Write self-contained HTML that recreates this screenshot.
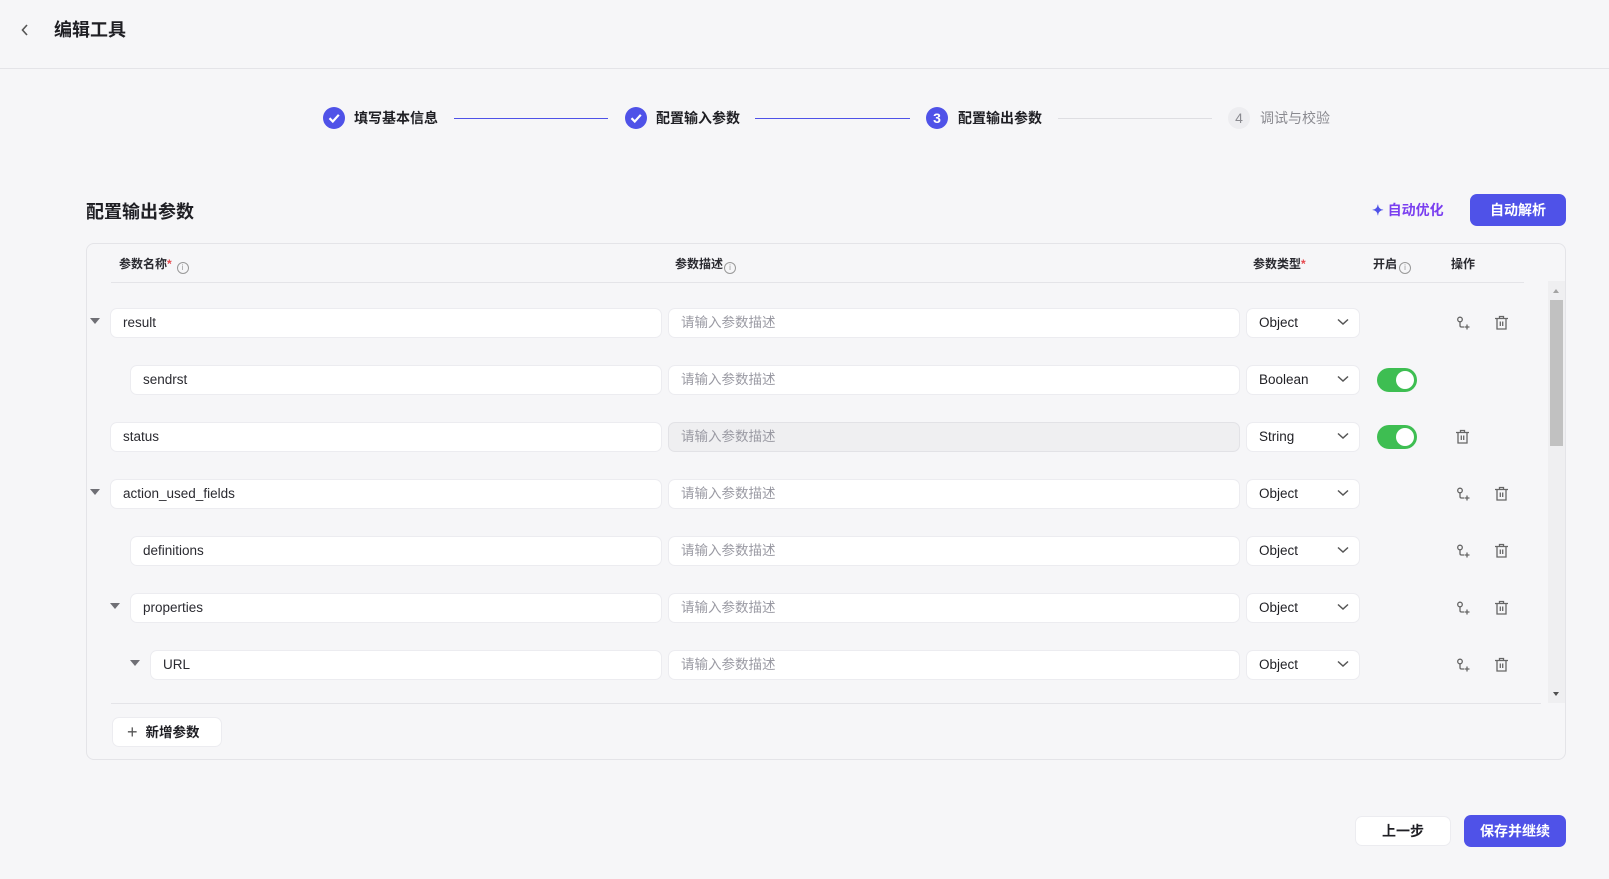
<!DOCTYPE html>
<html><head><meta charset="utf-8"><style>
*{box-sizing:border-box;margin:0;padding:0}
body{width:1609px;height:879px;background:#f6f6f8;font-family:"Liberation Sans","Noto Sans CJK SC",sans-serif;color:#1f1f24;position:relative;overflow:hidden}
.a{position:absolute}
.hdr{left:0;top:0;width:1609px;height:69px;border-bottom:1px solid #e4e4e8}
.step{font-size:14px;font-weight:600;top:109px;line-height:18px}
.circ{width:22px;height:22px;border-radius:50%;top:107px;background:#4f52e8;color:#fff;font-size:14px;text-align:center;line-height:22px;font-weight:600}
.ln{height:1px;top:118px}
.inp{height:30px;background:#fff;border:1px solid #ececf0;border-radius:7px;font-size:13.5px;line-height:28px;padding-left:12px;color:#2a2a30}
.ph{color:#9a9aa3}
.sel{height:30px;background:#fff;border:1px solid #ececf0;border-radius:7px;font-size:13.5px;line-height:28px;padding-left:12px;width:114px;left:1246px}
.sel svg{position:absolute;right:10px;top:9px}
.tri{width:0;height:0;border-left:5px solid transparent;border-right:5px solid transparent;border-top:6px solid #6f6f75}
.tog{width:40px;height:24px;border-radius:12px;background:#3ebe52;left:1377px}
.tog::after{content:"";position:absolute;right:3px;top:3px;width:18px;height:18px;border-radius:50%;background:#fff}
.th{font-size:12px;font-weight:600;top:256px;color:#2a2a30;line-height:16px}
.info{display:inline-block;width:12px;height:12px;border:1px solid #999;border-radius:50%;font-size:8px;line-height:10px;text-align:center;color:#999;vertical-align:-2px;margin-left:5px;font-weight:400}
.star{color:#e5484d}
</style></head><body>
<div class="a hdr"></div>
<svg class="a" style="left:20px;top:23px" width="10" height="14" viewBox="0 0 10 14"><path d="M7 2 L2.5 7 L7 12" fill="none" stroke="#555" stroke-width="1.6"/></svg>
<div class="a" style="left:54px;top:18px;font-size:18px;font-weight:700;line-height:24px">编辑工具</div>

<div class="a circ" style="left:323px"><svg width="22" height="22" viewBox="0 0 22 22"><path d="M6.5 11.2 L9.8 14.5 L15.8 7.8" fill="none" stroke="#fff" stroke-width="2.2"/></svg></div>
<div class="a step" style="left:354px">填写基本信息</div>
<div class="a ln" style="left:454px;width:154px;background:#4f52e8"></div>
<div class="a circ" style="left:625px"><svg width="22" height="22" viewBox="0 0 22 22"><path d="M6.5 11.2 L9.8 14.5 L15.8 7.8" fill="none" stroke="#fff" stroke-width="2.2"/></svg></div>
<div class="a step" style="left:656px">配置输入参数</div>
<div class="a ln" style="left:755px;width:155px;background:#4f52e8"></div>
<div class="a circ" style="left:926px">3</div>
<div class="a step" style="left:958px">配置输出参数</div>
<div class="a ln" style="left:1058px;width:154px;background:#dedee2"></div>
<div class="a circ" style="left:1228px;background:#ededf0;color:#8a8a90;font-weight:400">4</div>
<div class="a step" style="left:1260px;color:#8a8a90;font-weight:400">调试与校验</div>

<div class="a" style="left:86px;top:200px;font-size:18px;font-weight:700;line-height:24px">配置输出参数</div>
<div class="a" style="left:1372px;top:201px;font-size:14px;font-weight:600;color:#7a3ff0;line-height:18px"><span style="color:#4f52e8">✦</span>&nbsp;自动优化</div>
<div class="a" style="left:1470px;top:194px;width:96px;height:32px;border-radius:7px;background:#4f52e8;color:#fff;font-size:14px;font-weight:600;text-align:center;line-height:32px">自动解析</div>

<div class="a" style="left:86px;top:243px;width:1480px;height:517px;border:1px solid #e4e4e8;border-radius:8px"></div>
<div class="a th" style="left:119px">参数名称<span class="star">*</span><span class="info">i</span></div>
<div class="a th" style="left:675px">参数描述<span class="info" style="margin-left:1px">i</span></div>
<div class="a th" style="left:1253px">参数类型<span class="star">*</span></div>
<div class="a th" style="left:1373px">开启<span class="info" style="margin-left:2px">i</span></div>
<div class="a th" style="left:1451px">操作</div>
<div class="a" style="left:111px;top:282px;width:1413px;height:1px;background:#e4e4e8"></div>
<div class="a" style="left:1548px;top:281px;width:17px;height:422px;background:#efeff1"></div>
<div class="a" style="left:1550px;top:300px;width:13px;height:146px;background:#c1c1c1"></div>
<div class="a" style="left:1553px;top:289px;width:0;height:0;border-left:3.5px solid transparent;border-right:3.5px solid transparent;border-bottom:4px solid #a3a3a3"></div>
<div class="a" style="left:1553px;top:692px;width:0;height:0;border-left:3.5px solid transparent;border-right:3.5px solid transparent;border-top:4px solid #505050"></div>
<div class="a" style="left:111px;top:703px;width:1430px;height:1px;background:#e4e4e8"></div>

<div class="a tri" style="left:90px;top:318px"></div>
<div class="a inp" style="left:110px;top:308px;width:552px">result</div>
<div class="a inp ph" style="left:668px;top:308px;width:572px">请输入参数描述</div>
<div class="a sel" style="top:308px">Object<svg width="12" height="8"><path d="M1 1.5 L6 6 L11 1.5" fill="none" stroke="#555" stroke-width="1.5"/></svg></div>

<div class="a inp" style="left:130px;top:365px;width:532px">sendrst</div>
<div class="a inp ph" style="left:668px;top:365px;width:572px">请输入参数描述</div>
<div class="a sel" style="top:365px">Boolean<svg width="12" height="8"><path d="M1 1.5 L6 6 L11 1.5" fill="none" stroke="#555" stroke-width="1.5"/></svg></div>
<div class="a tog" style="top:368px"></div>

<div class="a inp" style="left:110px;top:422px;width:552px">status</div>
<div class="a inp ph" style="left:668px;top:422px;width:572px;background:#efeff1;border-color:#e2e2e6">请输入参数描述</div>
<div class="a sel" style="top:422px">String<svg width="12" height="8"><path d="M1 1.5 L6 6 L11 1.5" fill="none" stroke="#555" stroke-width="1.5"/></svg></div>
<div class="a tog" style="top:425px"></div>

<div class="a tri" style="left:90px;top:489px"></div>
<div class="a inp" style="left:110px;top:479px;width:552px">action_used_fields</div>
<div class="a inp ph" style="left:668px;top:479px;width:572px">请输入参数描述</div>
<div class="a sel" style="top:479px">Object<svg width="12" height="8"><path d="M1 1.5 L6 6 L11 1.5" fill="none" stroke="#555" stroke-width="1.5"/></svg></div>

<div class="a inp" style="left:130px;top:536px;width:532px">definitions</div>
<div class="a inp ph" style="left:668px;top:536px;width:572px">请输入参数描述</div>
<div class="a sel" style="top:536px">Object<svg width="12" height="8"><path d="M1 1.5 L6 6 L11 1.5" fill="none" stroke="#555" stroke-width="1.5"/></svg></div>

<div class="a tri" style="left:110px;top:603px"></div>
<div class="a inp" style="left:130px;top:593px;width:532px">properties</div>
<div class="a inp ph" style="left:668px;top:593px;width:572px">请输入参数描述</div>
<div class="a sel" style="top:593px">Object<svg width="12" height="8"><path d="M1 1.5 L6 6 L11 1.5" fill="none" stroke="#555" stroke-width="1.5"/></svg></div>

<div class="a tri" style="left:130px;top:660px"></div>
<div class="a inp" style="left:150px;top:650px;width:512px">URL</div>
<div class="a inp ph" style="left:668px;top:650px;width:572px">请输入参数描述</div>
<div class="a sel" style="top:650px">Object<svg width="12" height="8"><path d="M1 1.5 L6 6 L11 1.5" fill="none" stroke="#555" stroke-width="1.5"/></svg></div>

<svg width="0" height="0" style="position:absolute"><defs>
<g id="br"><circle cx="4" cy="3.5" r="2.3" fill="none" stroke="#666" stroke-width="1.3"/><path d="M4 6 V9.5 Q4 11 5.5 11 H8" fill="none" stroke="#666" stroke-width="1.3"/><path d="M11 8.5 V13.5 M8.5 11 H13.5" stroke="#666" stroke-width="1.3"/></g>
<g id="tr"><path d="M1 3.5 H14 M5.5 3.5 V1.5 H9.5 V3.5 M3 3.5 V14 H12 V3.5 M6.3 6.5 V11 M8.7 6.5 V11" fill="none" stroke="#666" stroke-width="1.3"/></g>
</defs></svg>
<svg class="a" style="left:1456px;top:316px" width="15" height="15"><use href="#br"/></svg>
<svg class="a" style="left:1494px;top:315px" width="15" height="15"><use href="#tr"/></svg>
<svg class="a" style="left:1455px;top:429px" width="15" height="15"><use href="#tr"/></svg>
<svg class="a" style="left:1456px;top:487px" width="15" height="15"><use href="#br"/></svg>
<svg class="a" style="left:1494px;top:486px" width="15" height="15"><use href="#tr"/></svg>
<svg class="a" style="left:1456px;top:544px" width="15" height="15"><use href="#br"/></svg>
<svg class="a" style="left:1494px;top:543px" width="15" height="15"><use href="#tr"/></svg>
<svg class="a" style="left:1456px;top:601px" width="15" height="15"><use href="#br"/></svg>
<svg class="a" style="left:1494px;top:600px" width="15" height="15"><use href="#tr"/></svg>
<svg class="a" style="left:1456px;top:658px" width="15" height="15"><use href="#br"/></svg>
<svg class="a" style="left:1494px;top:657px" width="15" height="15"><use href="#tr"/></svg>

<div class="a" style="left:112px;top:717px;width:110px;height:30px;background:#fff;border:1px solid #ececf0;border-radius:7px;font-size:13.5px;font-weight:600;line-height:28px;padding-left:14px"><span style="font-weight:300;font-size:18px;color:#555;vertical-align:-1px;margin-right:8px">+</span>新增参数</div>

<div class="a" style="left:1355px;top:816px;width:96px;height:30px;background:#fff;border:1px solid #ececf0;border-radius:7px;font-size:14px;font-weight:600;text-align:center;line-height:28px">上一步</div>
<div class="a" style="left:1464px;top:815px;width:102px;height:32px;background:#4f52e8;border-radius:7px;color:#fff;font-size:14px;font-weight:600;text-align:center;line-height:32px">保存并继续</div>
</body></html>
